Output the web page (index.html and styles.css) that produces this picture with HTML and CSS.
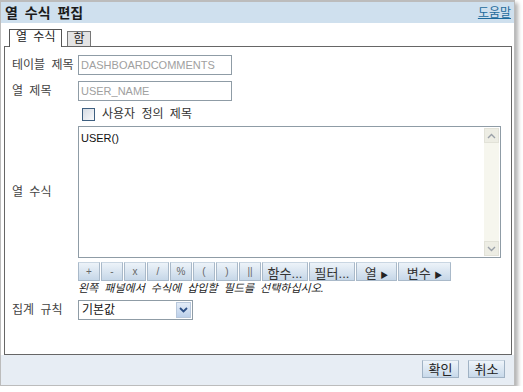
FILE: index.html
```html
<!DOCTYPE html>
<html lang="ko">
<head>
    <meta charset="UTF-8">
    <title>열 수식 편집</title>
    <link rel="stylesheet" href="styles.css">
</head>
<body>
    <div class="dialog">
        <div class="header">
            <span class="title">열 수식 편집</span>
            <a href="#" class="help-link">도움말</a>
        </div>

        <div class="tabs">
            <div class="tab active">열 수식</div>
            <div class="tab">함</div>
        </div>

        <div class="panel">
            <div class="form-row">
                <label class="field-label">테이블 제목</label>
                <input type="text" class="text-input" value="DASHBOARDCOMMENTS" disabled>
            </div>
            <div class="form-row">
                <label class="field-label">열 제목</label>
                <input type="text" class="text-input" value="USER_NAME" disabled>
            </div>
            <div class="form-row check-row">
                <span class="field-label"></span>
                <span class="checkbox"></span>
                <span class="check-label">사용자 정의 제목</span>
            </div>
            <div class="form-row formula-row">
                <label class="field-label">열 수식</label>
                <div class="formula-box">
                    <div class="formula-text">USER()</div>
                    <div class="scrollbar">
                        <div class="scroll-btn">
                            <svg width="9" height="6" viewBox="0 0 9 6"><path d="M1 5 L4.5 1.5 L8 5" fill="none" stroke="#9aa0a8" stroke-width="1.4"/></svg>
                        </div>
                        <div class="scroll-track"></div>
                        <div class="scroll-btn">
                            <svg width="9" height="6" viewBox="0 0 9 6"><path d="M1 1 L4.5 4.5 L8 1" fill="none" stroke="#9aa0a8" stroke-width="1.4"/></svg>
                        </div>
                    </div>
                </div>
            </div>
            <div class="form-row">
                <span class="field-label"></span>
                <div class="op-buttons">
                    <button class="op">+</button>
                    <button class="op">-</button>
                    <button class="op">x</button>
                    <button class="op">/</button>
                    <button class="op">%</button>
                    <button class="op">(</button>
                    <button class="op">)</button>
                    <button class="op">||</button>
                    <button class="fn fn-func">함수...</button>
                    <button class="fn fn-filter">필터...</button>
                    <button class="fn fn-col">열 <span class="arrow">&#9654;</span></button>
                    <button class="fn fn-var">변수 <span class="arrow">&#9654;</span></button>
                </div>
            </div>
            <div class="form-row">
                <span class="field-label"></span>
                <div class="hint">왼쪽 패널에서 수식에 삽입할 필드를 선택하십시오.</div>
            </div>
            <div class="form-row">
                <label class="field-label">집계 규칙</label>
                <div class="select-box">
                    <span class="select-value">기본값</span>
                    <span class="select-arrow">
                        <svg width="9" height="6" viewBox="0 0 9 6"><path d="M1 1 L4.5 4.5 L8 1" fill="none" stroke="#2c4f86" stroke-width="1.8"/></svg>
                    </span>
                </div>
            </div>
        </div>

        <div class="footer">
            <button class="footer-btn">확인</button>
            <button class="footer-btn">취소</button>
        </div>
    </div>
</body>
</html>
```

FILE: styles.css
```css
body {
    margin: 0;
    padding: 0;
    background-color: #fff;
    font-family: "Liberation Sans", "Noto Sans CJK KR", sans-serif;
    color: #333;
    word-spacing: 3px;
}

.dialog {
    width: 513px;
    height: 383px;
    border: 1px solid #bcbcbc;
    border-top-width: 2px;
    background-color: #fff;
    box-shadow: 3px 3px 4px rgba(0, 0, 0, 0.3);
    display: flex;
    flex-direction: column;
}

.header {
    height: 21px;
    background-color: #cfe0ee;
    display: flex;
    justify-content: space-between;
    align-items: center;
    padding: 0 3px 0 4px;
}

.title {
    font-size: 14px;
    font-weight: bold;
    color: #1b1b1b;
    line-height: 18px;
}

.help-link {
    font-size: 12px;
    color: #1d6a9c;
    line-height: 16px;
}

.tabs {
    display: flex;
    align-items: flex-end;
    gap: 5px;
    margin: 6px 2px 0 3px;
    padding-left: 5px;
    border-bottom: 1px solid #666;
}

.tab {
    font-size: 12px;
    line-height: 13px;
    padding: 1px 5px 0;
    height: 13px;
    border: 1px solid #777;
    border-bottom: none;
    background-color: #e4e4e4;
    color: #222;
}

.tab.active {
    height: 15px;
    padding: 1px 6px 1px;
    background-color: #fff;
    border-color: #555;
    margin-bottom: -1px;
}

.panel {
    flex: 1;
    margin: 0 2px 0 3px;
    border: 1px solid #666;
    border-top: none;
    padding: 8px 0 0 7px;
}

.form-row {
    display: flex;
    align-items: center;
    margin-bottom: 6px;
}

.field-label {
    width: 66px;
    flex-shrink: 0;
    font-size: 12px;
    color: #444;
    line-height: 14px;
}

.text-input {
    width: 154px;
    height: 20px;
    box-sizing: border-box;
    border: 1px solid #8f9ca6;
    background-color: #fff;
    padding: 0 2px;
    font-family: "Liberation Sans", sans-serif;
    font-size: 11px;
    color: #a0a0a0;
    margin: 0;
}

.check-row {
    height: 18px;
    margin-bottom: 3px;
    margin-top: -2px;
}

.checkbox {
    width: 11px;
    height: 11px;
    margin-left: 4px;
    border: 1px solid #3e5f80;
    background: linear-gradient(135deg, #d6dce4, #f8f9fb);
}

.check-label {
    font-size: 12px;
    color: #333;
    margin-left: 7px;
    line-height: 14px;
}

.formula-row {
    margin-bottom: 4px;
}

.formula-box {
    width: 423px;
    height: 132px;
    box-sizing: border-box;
    border: 1px solid #8f9ca6;
    display: flex;
}

.formula-text {
    flex: 1;
    font-family: "Liberation Sans", sans-serif;
    font-size: 11px;
    color: #111;
    padding: 5px 2px;
}

.scrollbar {
    width: 15px;
    margin: 1px 1px 1px 0;
    display: flex;
    flex-direction: column;
    background-color: #f6f6ee;
}

.scroll-btn {
    height: 15px;
    box-sizing: border-box;
    border: 1px solid #e2e2d8;
    background-color: #ededE4;
    display: flex;
    align-items: center;
    justify-content: center;
}

.scroll-track {
    flex: 1;
}

.op-buttons {
    display: flex;
    gap: 1px;
}

.op-buttons button {
    height: 19px;
    margin: 0;
    padding: 0;
    border: 1px solid #a9b9c9;
    border-top-color: #c9d6e2;
    background: linear-gradient(#edf3f9, #c6d7e8);
    font-family: "Liberation Sans", "Noto Sans CJK KR", sans-serif;
    word-spacing: 0;
}

.op {
    width: 22px;
    font-size: 10px;
    color: #666;
}

.fn {
    font-size: 13px;
    color: #333;
}

.fn-func {
    width: 46px;
    margin-left: 1px;
}

.fn-filter {
    width: 46px;
}

.fn-col {
    width: 41px;
    margin-left: 2px;
}

.fn-var {
    width: 53px;
    margin-left: 3px;
}

.arrow {
    font-size: 8px;
    color: #222;
}

.hint {
    font-size: 11px;
    font-style: italic;
    color: #222;
    line-height: 12px;
    margin-top: -5px;
}

.select-box {
    width: 115px;
    height: 20px;
    box-sizing: border-box;
    border: 1px solid #8f9ca6;
    display: flex;
    align-items: center;
    justify-content: space-between;
    padding: 0 1px 0 3px;
}

.select-value {
    font-size: 12px;
    color: #111;
    line-height: 14px;
}

.select-arrow {
    width: 15px;
    height: 16px;
    background: linear-gradient(#e3ecf8, #bcd0ea);
    border: 1px solid #b8c8dc;
    box-sizing: border-box;
    display: flex;
    align-items: center;
    justify-content: center;
}

.footer {
    height: 30px;
    background-color: #e7edf4;
    display: flex;
    justify-content: flex-end;
    align-items: flex-start;
    gap: 9px;
    padding: 5px 9px 0 0;
    box-sizing: border-box;
}

.footer-btn {
    width: 37px;
    height: 18px;
    padding: 0;
    margin: 0;
    border: 1px solid #a0b2c4;
    border-top-color: #c6d3df;
    background: linear-gradient(#eef4fa, #c8d9ea);
    font-family: "Noto Sans CJK KR", sans-serif;
    font-size: 13px;
    line-height: 14px;
    color: #222;
    word-spacing: 0;
}
```
